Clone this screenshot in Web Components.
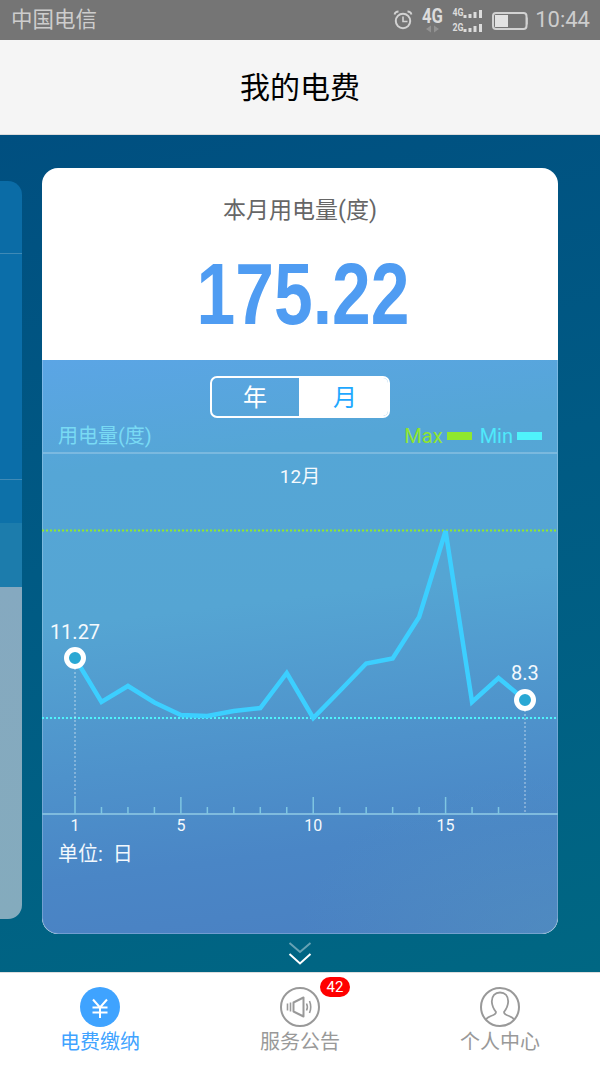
<!DOCTYPE html>
<html lang="zh">
<head>
<meta charset="utf-8">
<title>我的电费</title>
<style>
html,body{margin:0;padding:0;width:600px;height:1067px;overflow:hidden;background:#fff}
body{font-family:Roboto,"Noto Sans CJK SC",sans-serif;display:flex;flex-direction:column}
</style>
</head>
<body>
<status-bar></status-bar>
<app-header>我的电费</app-header>
<carousel-page>
  <side-card slot="side"></side-card>
  <usage-card label="本月用电量(度)" value="175.22">
    <usage-panel></usage-panel>
  </usage-card>
</carousel-page>
<tab-bar>
  <tab-item icon="yen" active>电费缴纳</tab-item>
  <tab-item icon="speaker" badge="42">服务公告</tab-item>
  <tab-item icon="user">个人中心</tab-item>
</tab-bar>
<script>
const FONT='Roboto,"Noto Sans CJK SC",sans-serif';
function define(name,html,init){
  customElements.define(name,class extends HTMLElement{
    constructor(){super();this.attachShadow({mode:'open'});}
    connectedCallback(){
      this.shadowRoot.innerHTML=typeof html==='function'?html(this):html;
      if(init)init(this);
    }
  });
}

define('status-bar',`<style>
:host{display:flex;flex:none;height:40px;background:#757575;color:#cdcdcd;font:22px/40px ${FONT};align-items:center;justify-content:space-between;padding:0 10px 0 11px;box-sizing:border-box}
.r{display:flex;align-items:center;gap:0}
.c{font-size:21.5px}
svg{display:block;fill:none}
.t{font-family:Roboto,sans-serif;margin-left:7.500px}
</style>
<span class="c">中国电信</span>
<div class="r">
<svg width="136" height="40" viewBox="392 0 136 40">
  <circle cx="403" cy="21" r="7.200" stroke="#d2d2d2" stroke-width="2"/>
  <path d="M403 16.500V21.500H407.500" stroke="#d2d2d2" stroke-width="1.600"/>
  <path d="M394.500 14.500C395 12.500 396.500 11.500 398.500 11.500M411.500 14.500C411 12.500 409.500 11.500 407.500 11.500" stroke="#d2d2d2" stroke-width="1.800"/>
  <text x="422" y="22.500" font-family="Roboto" font-weight="700" font-size="21" fill="#dcdcdc" textLength="21" lengthAdjust="spacingAndGlyphs">4G</text>
  <path d="M431 25.500V32.500L426 29ZM434 25.500V32.500L439 29Z" fill="#929292"/>
  <text x="452.500" y="16" font-family="Roboto" font-weight="700" font-size="10" fill="#dcdcdc" textLength="11" lengthAdjust="spacingAndGlyphs">4G</text>
  <text x="452.500" y="31" font-family="Roboto" font-weight="700" font-size="10" fill="#dcdcdc" textLength="11" lengthAdjust="spacingAndGlyphs">2G</text>
  <g fill="#dcdcdc">
    <rect x="463.500" y="15" width="3" height="3"/><rect x="468.500" y="14" width="3" height="4"/><rect x="473.500" y="12" width="3" height="6"/><rect x="479" y="10" width="3" height="8"/>
    <rect x="463.500" y="29" width="3" height="3"/><rect x="468.500" y="28" width="3" height="4"/><rect x="473.500" y="26" width="3" height="6"/><rect x="479" y="24" width="3" height="8"/>
  </g>
  <rect x="493" y="13" width="33.500" height="16" rx="3" stroke="#d2d2d2" stroke-width="2"/>
  <rect x="495" y="15" width="13" height="12" fill="#e2e2e2"/>
  <path d="M528 17.500V24.500" stroke="#d2d2d2" stroke-width="1.500"/>
</svg>
<span class="t">10:44</span>
</div>`);

define('app-header',`<style>
:host{display:flex;flex:none;height:95px;box-sizing:border-box;background:#f5f5f5;border-bottom:1px solid #dcdcdc;align-items:center;justify-content:center;color:#000;font:30px/1 ${FONT};padding-top:2px}
</style><slot></slot>`);

define('carousel-page',`<style>
:host{display:flex;flex:none;height:837px;box-sizing:border-box;padding-top:33px;overflow:hidden;background:linear-gradient(165deg,#004f80 0%,#005a84 45%,#006783 100%);position:relative;align-items:flex-start}
.c{position:absolute;left:288px;bottom:7px}
svg{display:block;fill:none}
</style>
<slot name="side"></slot><slot></slot>
<svg class="c" width="24" height="23" viewBox="0 0 24 23">
  <path d="M1.500 1L12 10L22.500 1" stroke="#fff" stroke-opacity=".4" stroke-width="2"/>
  <path d="M1.500 12L12 21.500L22.500 12" stroke="#fff" stroke-width="2"/>
</svg>`);

define('side-card',`<style>
:host{display:flex;flex-direction:column;flex:none;width:22px;height:738px;margin-top:13px;margin-right:20px;border-radius:0 14px 14px 0;overflow:hidden}
div{box-sizing:border-box}
.a{height:73px;background:#0b6ca6;border-bottom:1px solid #3f8ab6}
.b{height:226px;background:#0b6ea9;border-bottom:1px solid #3f8ab6}
.d{height:43px;background:#0d71a9}
.e{height:64px;background:#1c7cac}
.f{flex:1;background:linear-gradient(#85a9c0,#84abbd)}
</style><div class="a"></div><div class="b"></div><div class="d"></div><div class="e"></div><div class="f"></div>`);

define('usage-card',h=>`<style>
:host{display:flex;flex-direction:column;flex:none;width:516px;height:766px;border-radius:16px;overflow:hidden;background:#fff}
.top{flex:none;height:192px;display:flex;flex-direction:column;align-items:center}
.l{color:#666;font:23px/1 ${FONT};margin-top:31px}
.v{color:#4f9cf2;font:700 87px/1 "Liberation Sans",Arial,sans-serif;margin-top:28px;transform:translateX(3px) scaleX(.8);white-space:nowrap}
</style>
<div class="top"><div class="l">${h.getAttribute('label')}</div><div class="v">${h.getAttribute('value')}</div></div>
<slot></slot>`);

define('usage-panel',`<style>
:host{display:flex;flex-direction:column;flex:1;min-height:0;position:relative;
 background:radial-gradient(260px 160px at 100% 100%,rgba(85,150,190,.45),transparent),linear-gradient(173deg,#5ba5e5 0%,#55a6d6 18%,#55a5d3 42%,#4e92cb 66%,#4a86c6 82%,#4a80c2 100%);
 border-radius:0 0 16px 16px;box-shadow:inset 1px 0 rgba(255,255,255,.22),inset -1px 0 rgba(255,255,255,.22),inset 0 -1px rgba(255,255,255,.22)}
.legend{display:flex;align-items:center;box-sizing:border-box;height:36px;margin:0 1px;padding:2px 15px 0;border-bottom:2px solid rgba(255,255,255,.22);font:20px/1 ${FONT};color:#79daf4}
.sp{flex:1}
.k{display:inline-block;width:25px;height:8px;margin:0 0 3px 4px}
.mx{color:#8fe52f}.mx .k{background:#8fe82e}
.mn{color:#4fe9fb;margin-left:8px}.mn .k{background:#4ff3fb}
.unit{height:38px;padding-left:16px;color:#f2f8fd;font:20px/40px ${FONT};white-space:pre}
segment-toggle{margin:16px auto 0}
</style>
<segment-toggle></segment-toggle>
<div class="legend"><span>用电量(度)</span><span class="sp"></span><span class="mx">Max<i class="k"></i></span><span class="mn">Min<i class="k"></i></span></div>
<usage-chart></usage-chart>
<div class="unit">单位:  日</div>`);

define('segment-toggle',`<style>
:host{display:flex;flex:none;width:180px;height:42px;box-sizing:border-box;border:2px solid #fff;border-radius:7px;overflow:hidden;font:24px/40px ${FONT};text-align:center}
.a{width:86px;color:#fff;border-right:2px solid #fff;padding-right:1px}
.b{flex:1;background:#fff;color:#1ea8ff;padding-left:1px}
</style><div class="a">年</div><div class="b">月</div>`);

define('usage-chart',`<style>:host{display:block;flex:none;height:380px}svg{display:block}text{font-family:${FONT}}</style><svg id="s" width="516" height="380" viewBox="42 454 516 380"></svg>`,h=>{
  const ys=[658,702,686,702.5,715,716,711,708,673,718,691,663.500,658.500,617,531,702,678,700];
  const X=d=>75+(d-1)*450/17;
  let o='';
  o+=`<line x1="42" x2="558" y1="530.500" y2="530.500" stroke="#8fe82e" stroke-width="2" stroke-dasharray="2 2"/>`;
  o+=`<line x1="42" x2="558" y1="718" y2="718" stroke="#4ff3fb" stroke-width="2" stroke-dasharray="2 2"/>`;
  o+=`<line x1="42" x2="558" y1="814" y2="814" stroke="#7fbbde" stroke-width="2"/>`;
  for(let d=1;d<=17;d++){
    const big=d===1||d%5===0;
    o+=`<line x1="${X(d)}" x2="${X(d)}" y1="${big?797:807}" y2="814" stroke="#7fc6e2" stroke-width="1.500"/>`;
  }
  o+=`<line x1="75" x2="75" y1="668" y2="797" stroke="#fff" stroke-opacity=".4" stroke-width="1.500" stroke-dasharray="2 2"/>`;
  o+=`<line x1="525" x2="525" y1="710" y2="814" stroke="#fff" stroke-opacity=".4" stroke-width="1.500" stroke-dasharray="2 2"/>`;
  o+=`<polyline fill="none" stroke="#3ccfff" stroke-width="4.500" stroke-linejoin="miter" points="${ys.map((y,i)=>X(i+1)+','+y).join(' ')}"/>`;
  [[75,658],[525,700]].forEach(([x,y])=>{
    o+=`<circle cx="${x}" cy="${y}" r="8.500" fill="#2aa8d4" stroke="#fff" stroke-width="5"/>`;
  });
  const t=(x,y,s,txt,a='middle')=>`<text x="${x}" y="${y}" font-size="${s}" fill="#f4f9fd" text-anchor="${a}">${txt}</text>`;
  o+=t(300,483,19,'12月');
  o+=t(75,638.500,20,'11.27');
  o+=t(525,680,20,'8.3');
  [[1],[5],[10],[15]].forEach(([d])=>{o+=t(X(d),831,16,d);});
  h.shadowRoot.getElementById('s').innerHTML=o;
});

define('tab-bar',`<style>
:host{display:grid;grid-template-columns:repeat(3,1fr);flex:none;height:95px;box-sizing:border-box;background:#fff;border-top:1px solid #dedede}
</style><slot></slot>`);

const ICONS={
 yen:`<circle cx="20" cy="20" r="20" fill="#3fa3ff"/><path d="M13 12.500L20 20.500L27 12.500M12.500 20.500H27.500M12.500 25.500H27.500M20 20.500V31" fill="none" stroke="#fff" stroke-width="2"/>`,
 speaker:`<circle cx="20" cy="20" r="19" fill="none" stroke="#999" stroke-width="2"/><path d="M13.500 15.500L23.500 10.500V29.500L13.500 24.500Z" fill="none" stroke="#999" stroke-width="2" stroke-linejoin="round"/><path d="M7.500 16.500V23.500M10.500 15.500V24.500M26.500 16.500Q28.300 20 26.500 23.500M29.500 14Q32 20 29.500 26" fill="none" stroke="#999" stroke-width="1.600"/>`,
 user:`<circle cx="20" cy="20" r="19" fill="none" stroke="#999" stroke-width="2"/><path d="M5.500 33C6.500 31 8.500 30 11 29C14 28 16 27 16 25C14 22.500 12 19 11.800 14.500C11.800 9 15 5.500 20 5.500C25 5.500 28.200 9 28.200 14.500C28 19 26 22.500 24 25C24 27 26 28 29 29C31.500 30 33.500 31 34.500 33" fill="none" stroke="#999" stroke-width="1.800"/>`
};
define('tab-item',h=>{
  const badge=h.getAttribute('badge');
  return `<style>
:host{display:flex;flex-direction:column;align-items:center;position:relative;padding-top:14px;color:${h.hasAttribute('active')?'#3fa3ff':'#999'};font:20px/1 ${FONT}}
svg{display:block;flex:none}
.lb{margin-top:1px;line-height:28px}
.badge{position:absolute;left:120px;top:4px;width:30px;height:20px;border-radius:10px;background:#f00;color:#fff;font:15px/20px Roboto,sans-serif;text-align:center}
</style><svg width="40" height="40" viewBox="0 0 40 40">${ICONS[h.getAttribute('icon')]}</svg><div class="lb"><slot></slot></div>${badge?`<div class="badge">${badge}</div>`:''}`;
});
</script>
</body>
</html>
